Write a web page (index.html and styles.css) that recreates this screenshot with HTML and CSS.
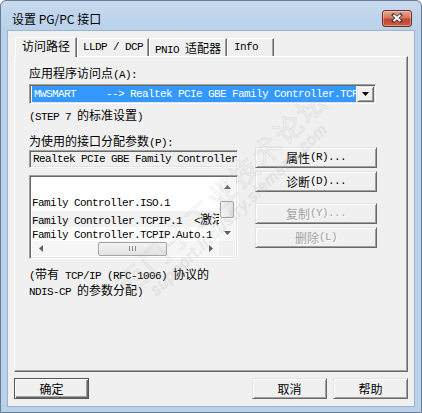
FILE: index.html
```html
<!DOCTYPE html>
<html lang="zh-CN">
<head>
  <meta charset="UTF-8" />
  <title>设置 PG/PC 接口</title>
  <link rel="stylesheet" href="styles.css">
</head>
<body>

  <div class="window">
    <header class="titlebar">
      <span class="title">设置 PG/PC 接口</span>
      <button class="close-btn" type="button" aria-label="关闭">
        <svg width="12" height="10" viewBox="0 0 12 10">
          <path d="M2.5 2 L9.5 8 M9.5 2 L2.5 8" stroke="#404040" stroke-width="3.4" stroke-linecap="square" fill="none"/>
          <path d="M2.5 2 L9.5 8 M9.5 2 L2.5 8" stroke="#fff" stroke-width="1.8" fill="none"/>
        </svg>
      </button>
    </header>

    <div class="client">
      <nav class="tabs">
        <div class="tab active"><span class="zh">访问路径</span></div>
        <div class="tab">LLDP / DCP</div>
        <div class="tab">PNIO <span class="zh">适配器</span></div>
        <div class="tab tab-info">Info</div>
      </nav>

      <section class="panel">
        <div class="label"><span class="zh">应用程序访问点</span>(A):</div>
        <div class="combo">
          <div class="combo-value">MWSMART     --&gt; Realtek PCIe GBE Family Controller.TCPIP.1</div>
          <div class="combo-arrow">
            <svg width="7" height="4" viewBox="0 0 7 4"><polygon points="0,0 7,0 3.5,4" fill="#000"/></svg>
          </div>
        </div>
        <div class="note">(STEP 7 <span class="zh">的标准设置</span>)</div>

        <div class="label label-params"><span class="zh">为使用的接口分配参数</span>(P):</div>
        <div class="assign">
          <div class="assign-left">
            <div class="field">Realtek PCIe GBE Family Controller</div>
            <div class="listbox">
              <div class="list-main">
                <div class="list-items">
                  <div class="row"></div>
                  <div class="row">Family Controller.ISO.1</div>
                  <div class="row focus">Family Controller.TCPIP.1  &lt;<span class="zh">激活</span></div>
                  <div class="row">Family Controller.TCPIP.Auto.1</div>
                </div>
                <div class="vscroll">
                  <div class="sb-arrow">
                    <svg width="7" height="4" viewBox="0 0 7 4"><polygon points="0,4 7,4 3.5,0" fill="#606060"/></svg>
                  </div>
                  <div class="sb-track"><div class="thumb v-thumb"></div></div>
                  <div class="sb-arrow">
                    <svg width="7" height="4" viewBox="0 0 7 4"><polygon points="0,0 7,0 3.5,4" fill="#606060"/></svg>
                  </div>
                </div>
              </div>
              <div class="hscroll">
                <div class="sb-arrow">
                  <svg width="4" height="7" viewBox="0 0 4 7"><polygon points="4,0 4,7 0,3.5" fill="#606060"/></svg>
                </div>
                <div class="sb-track h-track">
                  <div class="thumb h-thumb">
                    <svg width="7" height="5" viewBox="0 0 7 5"><path d="M0.5 0v5M3.5 0v5M6.5 0v5" stroke="#8a8a8a" stroke-width="1"/></svg>
                  </div>
                </div>
                <div class="sb-arrow">
                  <svg width="4" height="7" viewBox="0 0 4 7"><polygon points="0,0 0,7 4,3.5" fill="#606060"/></svg>
                </div>
                <div class="sb-corner"></div>
              </div>
            </div>
          </div>

          <div class="side-buttons">
            <button class="btn" type="button"><span class="zh">属性</span>(R)...</button>
            <button class="btn" type="button"><span class="zh">诊断</span>(D)...</button>
            <button class="btn disabled gap" type="button"><span class="zh">复制</span>(Y)...</button>
            <button class="btn disabled" type="button"><span class="zh">删除</span>(L)</button>
          </div>
        </div>

        <p class="desc">(<span class="zh">带有</span> TCP/IP (RFC-1006) <span class="zh">协议的</span><br>NDIS-CP <span class="zh">的参数分配</span>)</p>

        <div class="watermark" aria-hidden="true">
          <div class="wm-big">西门子工业技术论坛</div>
          <div class="wm-small">support.industry.siemens.com</div>
        </div>
      </section>

      <footer class="footer">
        <button class="btn btn-wide default" type="button"><span class="zh">确定</span></button>
        <div class="footer-right">
          <button class="btn btn-wide" type="button"><span class="zh">取消</span></button>
          <button class="btn btn-wide" type="button"><span class="zh">帮助</span></button>
        </div>
      </footer>
    </div>
  </div>

</body>
</html>
```

FILE: styles.css
```css
/* ===== Palette (Win7 basic + classic controls) ===== */
:root {
  --face: #f0f0f0;
  --light: #e3e3e3;
  --shadow: #a0a0a0;
  --dark: #696969;
  --frame: #b9d1ea;
  --frame-top: #c7d9ee;
  --frame-edge: #6b7c92;
  --highlight: #3399ff;
}

/* Reset & Base */
*, *::before, *::after { box-sizing: border-box; margin: 0; padding: 0; }
body {
  background: #fff;
  color: #000;
  font: 11px/13px "Liberation Mono", monospace;
  letter-spacing: -0.6px;
}
.zh {
  font-family: "Noto Sans CJK SC", sans-serif;
  font-size: 12px;
  letter-spacing: 0;
}
button { font: inherit; letter-spacing: inherit; color: inherit; }

/* Window frame */
.window {
  width: 422px;
  height: 413px;
  display: flex;
  flex-direction: column;
  padding: 0 6px 5px;
  border: 1px solid var(--frame-edge);
  border-radius: 6px 6px 0 0;
  background: linear-gradient(var(--frame-top), var(--frame) 30px);
}
.titlebar {
  height: 29px;
  display: flex;
  align-items: center;
  justify-content: space-between;
  padding: 5px 3px 0 5px;
}
.title {
  font-family: "Noto Sans CJK SC", sans-serif;
  font-size: 12px;
  letter-spacing: 0;
}
.close-btn {
  width: 30px;
  height: 17px;
  display: flex;
  align-items: center;
  justify-content: center;
  border: 1px solid #6d2b22;
  border-radius: 3px;
  background: linear-gradient(#e8a493, #d27660 45%, #c2442f 55%, #cf5b3f);
  box-shadow: inset 0 0 0 1px rgba(255, 255, 255, 0.35);
}

/* Client area */
.client {
  flex: 1;
  display: flex;
  flex-direction: column;
  padding: 6px 6px 7px;
  border: 1px solid #9fb4cb;
  background: var(--face);
}

/* Tabs */
.tabs {
  position: relative;
  z-index: 1;
  height: 19px;
  display: flex;
  align-items: flex-end;
  padding-left: 1px;
}
.tab {
  height: 18px;
  padding: 2px 5px 0;
  border-top: 1px solid #fff;
  border-left: 1px solid #fff;
  border-right: 1px solid var(--dark);
  box-shadow: inset -1px 0 var(--shadow);
  white-space: pre;
}
.tab.active {
  height: 20px;
  margin-bottom: -1px;
  padding: 1px 6px 0;
  background: var(--face);
}
.tab-info { min-width: 47px; padding-left: 6px; }

/* Tab page */
.panel {
  position: relative;
  flex: 1;
  padding: 9px 14px 0;
  border: 1px solid;
  border-color: #fff var(--dark) var(--dark) #fff;
  box-shadow: inset -1px -1px var(--shadow);
  overflow: hidden;
}
.label { height: 13px; white-space: pre; }
.label-params { margin-top: 10px; }
.note { margin-top: 4px; white-space: pre; }

/* Sunken controls */
.combo, .field, .listbox {
  border: 1px solid;
  border-color: var(--shadow) #fff #fff var(--shadow);
  box-shadow: inset 1px 1px var(--dark), inset -1px -1px var(--light);
  background: #fff;
}
.combo {
  width: 347px;
  height: 20px;
  margin-top: 5px;
  display: flex;
  padding: 1px;
}
.combo-value {
  flex: 1;
  margin: 0 1px;
  padding-left: 2px;
  overflow: hidden;
  white-space: pre;
  line-height: 16px;
  color: #fff;
  background: var(--highlight);
}
.combo-arrow {
  width: 17px;
  display: flex;
  align-items: center;
  justify-content: center;
  border: 1px solid;
  border-color: var(--light) var(--dark) var(--dark) var(--light);
  box-shadow: inset 1px 1px #fff, inset -1px -1px var(--shadow);
  background: var(--face);
}

/* Parameter block */
.assign {
  margin-top: 3px;
  display: grid;
  grid-template-columns: 209px 122px;
  column-gap: 17px;
  align-items: start;
}
.field {
  height: 18px;
  padding: 2px 0 0 3px;
  overflow: hidden;
  white-space: pre;
  background: var(--face);
}
.listbox {
  height: 84px;
  margin-top: 7px;
  padding: 2px;
  display: flex;
  flex-direction: column;
}
.list-main { flex: 1; display: flex; min-height: 0; }
.list-items {
  flex: 1;
  padding-top: 1px;
  overflow: hidden;
}
.row { height: 16px; line-height: 16px; white-space: pre; overflow: hidden; }
.row.focus { background: #f2f2f2; }

/* Scroll bars */
.vscroll {
  width: 16px;
  display: flex;
  flex-direction: column;
  background: #f6f6f6;
}
.sb-arrow {
  flex: 0 0 17px;
  display: flex;
  align-items: center;
  justify-content: center;
}
.sb-track { flex: 1; }
.thumb {
  border: 1px solid #a3a3a3;
  border-radius: 2px;
  background: linear-gradient(90deg, #f4f4f4, #e2e2e2);
}
.v-thumb { height: 17px; margin: 6px 1px 0; }
.hscroll {
  height: 15px;
  display: flex;
  background: #f6f6f6;
}
.h-track { display: flex; align-items: center; }
.h-thumb {
  width: 69px;
  height: 14px;
  margin-left: 49px;
  display: flex;
  align-items: center;
  justify-content: center;
  background: linear-gradient(#f4f4f4, #e2e2e2);
}
.sb-corner { width: 16px; background: var(--face); }

/* Buttons */
.side-buttons {
  margin-top: -3px;
  display: flex;
  flex-direction: column;
  gap: 3px;
}
.btn {
  height: 21px;
  display: flex;
  align-items: center;
  justify-content: center;
  white-space: pre;
  border: 1px solid;
  border-color: var(--light) var(--dark) var(--dark) var(--light);
  box-shadow: inset 1px 1px #fff, inset -1px -1px var(--shadow);
  background: var(--face);
}
.btn.gap { margin-top: 8px; }
.btn.disabled { color: var(--shadow); text-shadow: 1px 1px #fff; }
.btn-wide { width: 75px; }
.btn.default {
  border-color: #555;
  box-shadow: inset 1px 1px #fff, inset -1px -1px var(--dark), inset -2px -2px var(--shadow);
}

.desc { margin-top: 8px; white-space: pre; }

/* Forum watermark over the tab page */
.watermark {
  position: absolute;
  left: 58px;
  top: 116px;
  width: 310px;
  transform: rotate(-44deg);
  color: transparent;
  -webkit-text-stroke: 1px rgba(175, 175, 175, 0.22);
  pointer-events: none;
  text-align: center;
  letter-spacing: 0;
}
.wm-big {
  font: 28px/32px "Noto Sans CJK SC", sans-serif;
  letter-spacing: 3px;
}
.wm-small {
  font: italic 16px/18px "Liberation Sans", sans-serif;
  letter-spacing: 1px;
}

/* Footer */
.footer {
  margin-top: 6px;
  display: flex;
  justify-content: space-between;
}
.footer-right { display: flex; gap: 6px; }
```
